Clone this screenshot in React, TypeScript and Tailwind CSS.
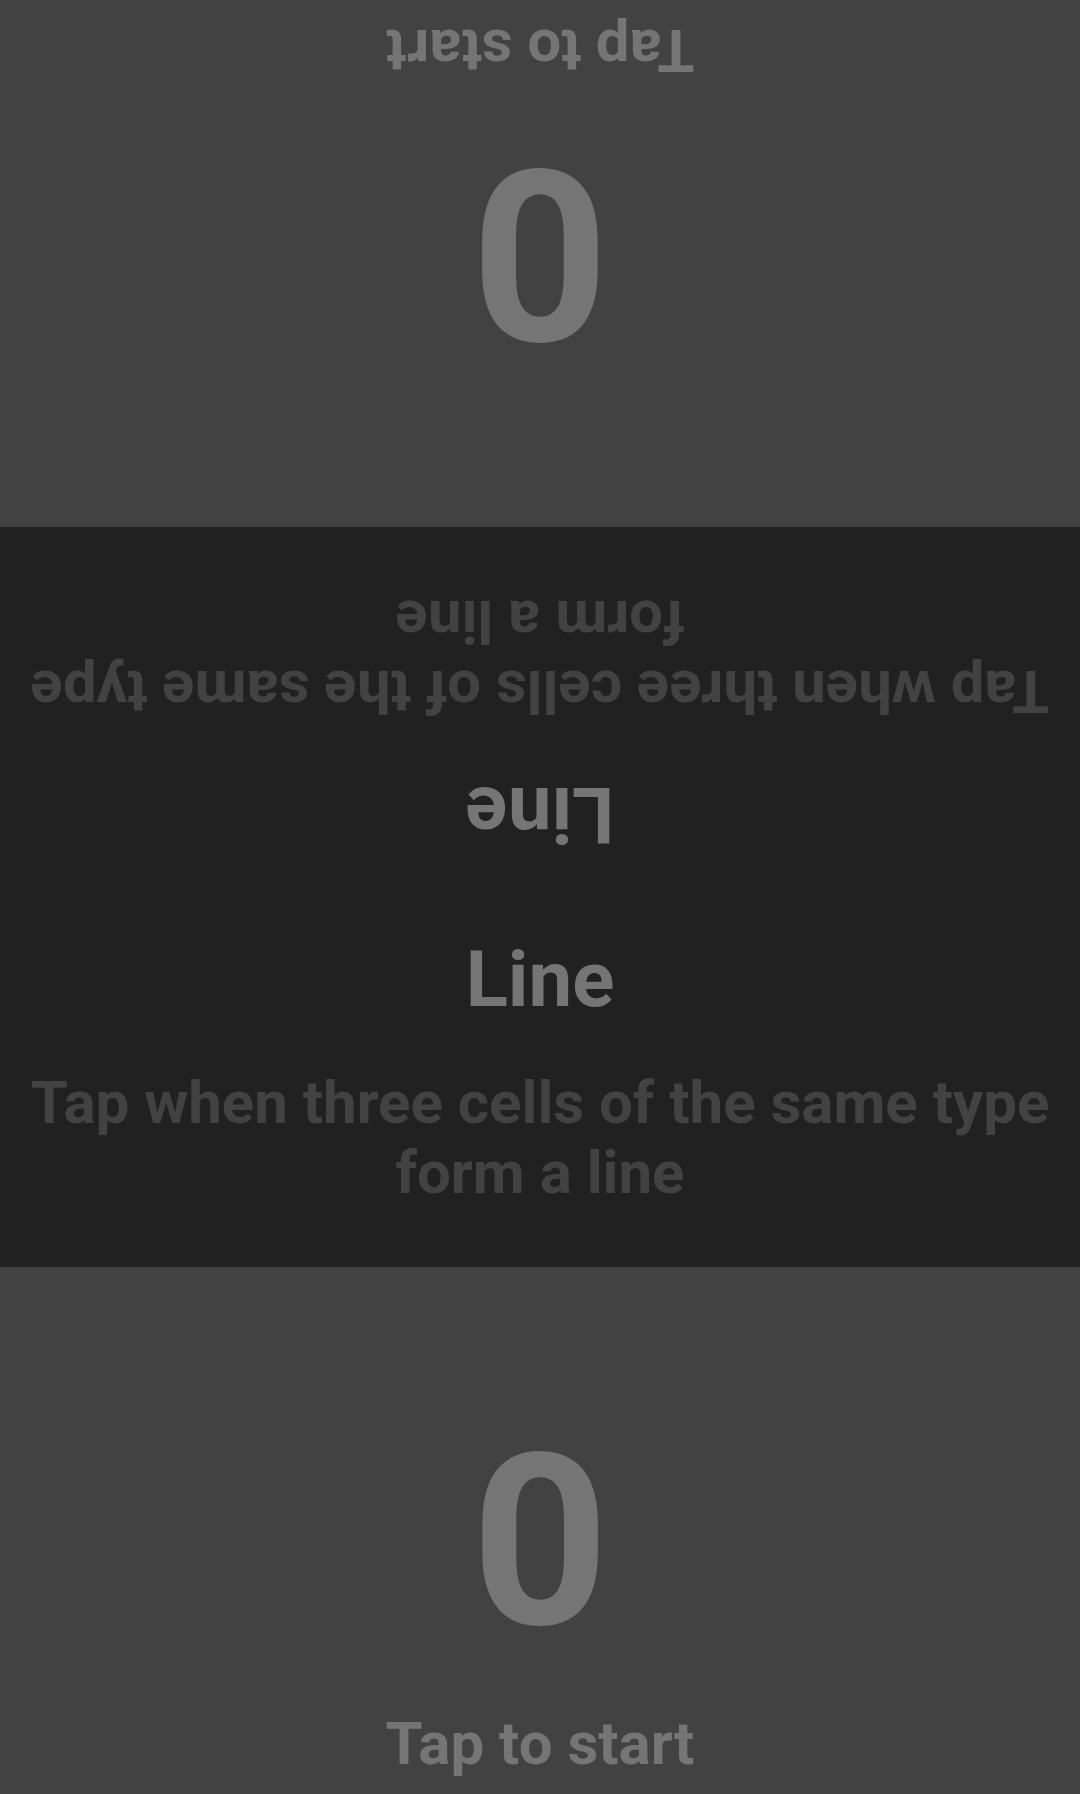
import React from 'react';

// ====== Player panel (score + start hint) ======
function PlayerPanel({ flipped }: { flipped?: boolean }) {
  return (
    <div
      className={
        'flex-1 flex flex-col items-center justify-end bg-[#424242] pb-[20px] ' +
        (flipped ? 'rotate-180' : '')
      }
    >
      <div className="text-[240px] leading-none font-bold text-[#757575]">0</div>
      <div className="mt-[52px] text-[60px] leading-none font-bold text-[#757575]">Tap to start</div>
    </div>
  );
}

// ====== Rule half (title + description) ======
function RuleHalf({ flipped }: { flipped?: boolean }) {
  return (
    <div
      className={
        'flex flex-col items-center pt-[44px] pb-[59px] px-4 text-center ' +
        (flipped ? 'rotate-180' : '')
      }
    >
      <div className="text-[78px] leading-none font-bold text-[#757575]">Line</div>
      <div className="mt-[49px] text-[60px] leading-[70px] font-bold text-[#424242]">
        Tap when three cells of the same type form a line
      </div>
    </div>
  );
}

export default function App() {
  return (
    <div
      className="flex flex-col w-[1080px] h-[1794px] overflow-hidden select-none"
      style={{ fontFamily: 'Roboto, "Noto Sans", sans-serif' }}
    >
      <PlayerPanel flipped />
      <div className="flex flex-col bg-[#212121]">
        <RuleHalf flipped />
        <RuleHalf />
      </div>
      <PlayerPanel />
    </div>
  );
}
